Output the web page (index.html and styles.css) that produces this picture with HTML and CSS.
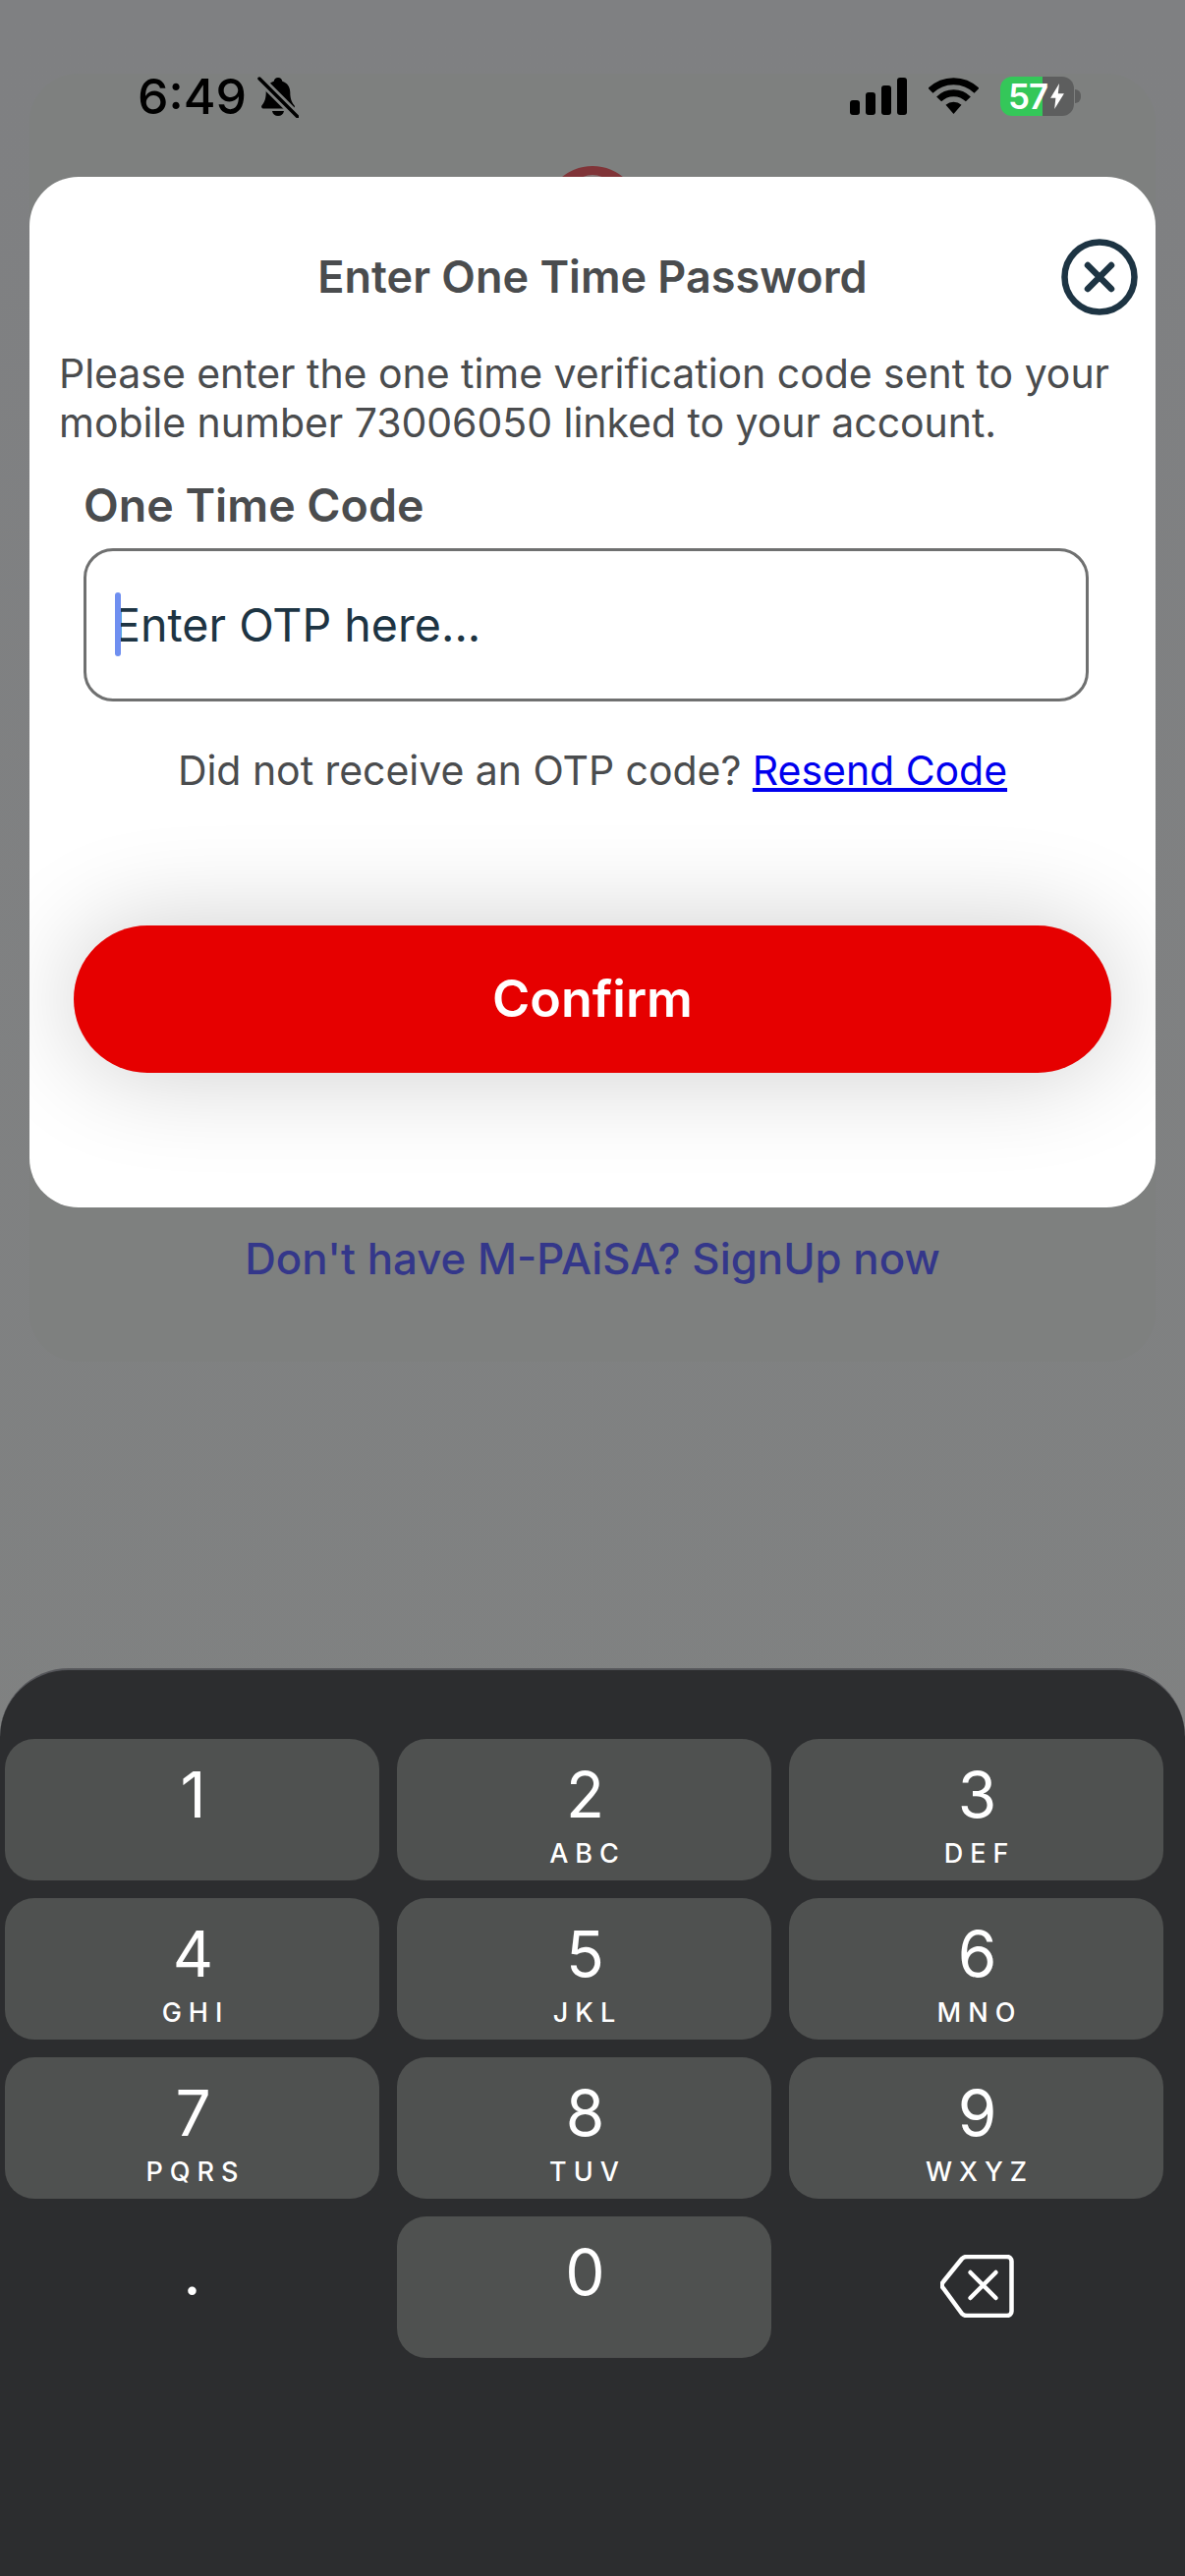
FILE: index.html
```html
<!doctype html>
<html lang="en">
<head>
	<meta charset="UTF-8">
	<title>Enter One Time Password</title>
	<link rel="stylesheet" href="styles.css">
</head>
<body>
	<div class="screen">
		<div class="backcard">
			<div class="status">
				<div class="status-left">
					<span class="time">6:49</span>
					<svg class="bell" width="42" height="42" viewBox="0 0 42 42">
						<path d="M21 1c2.400 0 4 1.600 4.300 3.700 5.200 1.500 8 5.800 8 11.300 0 6 1.200 9.500 4.200 13.300 1 1.300.2 3.200-1.500 3.200H6c-1.700 0-2.500-1.900-1.500-3.200 3-3.800 4.200-7.300 4.200-13.300 0-5.500 2.800-9.800 8-11.300C17 2.600 18.600 1 21 1z"/>
						<path d="M15 35h12c-.6 3.200-3 5-6 5s-5.400-1.800-6-5z"/>
						<path class="bell-cut" d="M0 0l42 42"/>
						<path class="bell-slash" d="M2 2l39 39"/>
					</svg>
				</div>
				<div class="status-right">
					<svg width="58" height="38" viewBox="0 0 58 38">
						<rect x="0" y="23" width="10" height="15" rx="3"/>
						<rect x="16" y="15" width="10" height="23" rx="3"/>
						<rect x="32" y="8" width="10" height="30" rx="3"/>
						<rect x="48" y="0" width="10" height="38" rx="3"/>
					</svg>
					<svg class="wifi" width="51" height="38" viewBox="0 0 51 38">
						<path class="wifi-arc" d="M2 13.300a33.500 33.500 0 0 1 47 0"/>
						<path class="wifi-arc" d="M10.600 21.900a21 21 0 0 1 29.800 0"/>
						<path d="M25.500 37L17.500 27.800a12 12 0 0 1 16 0z"/>
					</svg>
					<div class="battery">
						<span class="battery-level">57</span>
						<svg class="bolt" width="16" height="26" viewBox="0 0 17 32">
							<path d="M11 0L0 18h6.500L5 32 17 12.500H9.500z"/>
						</svg>
					</div>
					<div class="battery-nub"></div>
				</div>
			</div>
			<div class="logo"><div class="logo-inner"></div></div>
			<a class="signup">Don't have M-PAiSA? SignUp now</a>
		</div>

		<div class="keyboard">
			<div class="key"><span class="digit">1</span></div>
			<div class="key"><span class="digit">2</span><span class="letters">ABC</span></div>
			<div class="key"><span class="digit">3</span><span class="letters">DEF</span></div>
			<div class="key"><span class="digit">4</span><span class="letters">GHI</span></div>
			<div class="key"><span class="digit">5</span><span class="letters">JKL</span></div>
			<div class="key"><span class="digit">6</span><span class="letters">MNO</span></div>
			<div class="key"><span class="digit">7</span><span class="letters">PQRS</span></div>
			<div class="key"><span class="digit">8</span><span class="letters">TUV</span></div>
			<div class="key"><span class="digit">9</span><span class="letters">WXYZ</span></div>
			<div class="key key-plain"><span class="dot">.</span></div>
			<div class="key"><span class="digit">0</span></div>
			<div class="key key-plain">
				<svg class="backspace" width="78" height="64" viewBox="0 0 78 64">
					<path d="M27 4h41a4.500 4.500 0 0 1 4.500 4.500v51a4.500 4.500 0 0 1-4.500 4.500H27a7 7 0 0 1-5-2L3 36a4.500 4.500 0 0 1 0-6.500L22 6a7 7 0 0 1 5-2z" transform="translate(0,-2)"/>
					<path d="M30.500 18l26 26M56.500 18l-26 26"/>
				</svg>
			</div>
		</div>

		<div class="modal">
			<svg class="close" width="80" height="80" viewBox="0 0 80 80">
				<circle cx="40" cy="40" r="35.500"/>
				<path d="M28 28l24 24M52 28L28 52"/>
			</svg>
			<h1 class="modal-title">Enter One Time Password</h1>
			<p class="modal-text">Please enter the one time verification code sent to your mobile number 73006050 linked to your account.</p>
			<div class="field-label">One Time Code</div>
			<div class="field">
				<span class="caret"></span>
				<span class="placeholder">Enter OTP here...</span>
			</div>
			<p class="resend">Did not receive an OTP code? <a class="resend-link">Resend Code</a></p>
			<div class="confirm">Confirm</div>
		</div>
	</div>
</body>
</html>
```

FILE: styles.css
```css
*{
	padding: 0;
	margin: 0;
	box-sizing: border-box;
}
body{
	width: 1206px;
	height: 2622px;
	overflow: hidden;
	font-family: "Inter", "Liberation Sans", sans-serif;
	background-color: #7f8081;
}
.screen{
	position: relative;
	width: 1206px;
	height: 2622px;
	display: flex;
	flex-direction: column;
	padding-top: 75px;
	background: linear-gradient(#7f8082, #808281);
}
/*----------------------------page behind the popup----------------------------*/
.backcard{
	margin: 0 30px;
	height: 1311px;
	border-radius: 50px;
	background-color: #7e807f;
	display: flex;
	flex-direction: column;
	align-items: center;
}
.status{
	width: 100%;
	height: 45px;
	padding-left: 110px;
	display: flex;
	justify-content: space-between;
	align-items: center;
	color: #000;
}
.status-left{
	display: flex;
	align-items: center;
	gap: 11px;
}
.time{
	font-size: 50px;
	font-weight: 500;
	line-height: 48px;
}
.bell{
	margin-top: 2px;
}
.bell-cut{
	stroke: #7e807f;
	stroke-width: 9;
}
.bell-slash{
	stroke: #000;
	stroke-width: 3.500;
	stroke-linecap: round;
}
.status-right{
	width: 235px;
	margin-right: 76px;
	display: flex;
	align-items: center;
}
.wifi{
	margin-left: 22px;
	margin-right: 22px;
}
.wifi-arc{
	fill: none;
	stroke: #000;
	stroke-width: 7;
}
.battery{
	width: 75px;
	height: 40px;
	flex-shrink: 0;
	border-radius: 12px;
	padding-left: 8px;
	display: flex;
	align-items: center;
	background: linear-gradient(90deg, #34c759 43px, #5d5e5e 43px);
}
.battery-level{
	font-size: 35px;
	font-weight: 600;
	line-height: 40px;
	letter-spacing: -1px;
	color: #fff;
}
.bolt{
	fill: #fff;
	margin-left: 2px;
	flex-shrink: 0;
}
.battery-nub{
	width: 6px;
	height: 14px;
	flex-shrink: 0;
	margin-left: 1px;
	border-radius: 0 7px 7px 0;
	background-color: #5d5e5e;
}
.logo{
	width: 98px;
	height: 98px;
	margin-top: 49px;
	border-radius: 50%;
	background-color: #803438;
	padding-top: 9px;
}
.logo-inner{
	width: 50px;
	height: 50px;
	margin: 0 auto;
	border-radius: 50%;
	background-color: #8a7c7c;
}
.signup{
	margin-top: 990px;
	font-size: 43.800px;
	line-height: 50px;
	font-weight: 500;
	color: #34378a;
}
/*----------------------------popup----------------------------*/
.modal{
	position: absolute;
	left: 30px;
	top: 180px;
	width: 1146px;
	height: 1049px;
	border-radius: 50px;
	overflow: hidden;
	background-color: #fff;
	padding-top: 72px;
}
.close{
	position: absolute;
	right: 17px;
	top: 62px;
	fill: none;
	stroke: #1d3443;
	stroke-width: 6.500;
	stroke-linecap: round;
}
.modal-title{
	font-size: 45px;
	font-weight: 600;
	line-height: 60px;
	text-align: center;
	color: #4a4c4e;
}
.modal-text{
	margin-top: 43px;
	padding: 0 30px;
	font-size: 41px;
	line-height: 50px;
	color: #4a4c4e;
	letter-spacing: -0.04px;
}
.field-label{
	margin-top: 34px;
	margin-left: 55px;
	font-size: 46.500px;
	font-weight: 600;
	line-height: 50px;
	color: #4a4c4e;
}
.field{
	position: relative;
	margin-top: 19px;
	margin-left: 55px;
	width: 1023px;
	height: 156px;
	border: 3px solid #6f7070;
	border-radius: 30px;
	padding-left: 27px;
	display: flex;
	align-items: center;
}
.caret{
	position: absolute;
	left: 29px;
	top: 42px;
	width: 6px;
	height: 65px;
	border-radius: 3px;
	background-color: #6f8ff0;
}
.placeholder{
	font-size: 46.600px;
	line-height: 60px;
	color: #1d3443;
}
.resend{
	margin-top: 45px;
	font-size: 41px;
	line-height: 50px;
	text-align: center;
	color: #4a4c4e;
	letter-spacing: -0.04px;
}
.resend-link{
	color: #0000ee;
	text-decoration: underline;
}
.confirm{
	margin-top: 133px;
	margin-left: 45px;
	width: 1056px;
	height: 150px;
	border-radius: 75px;
	background-color: #e60000;
	box-shadow: 0 0 105px rgba(0,0,0,0.2);
	font-size: 52px;
	font-weight: 600;
	line-height: 150px;
	text-align: center;
	color: #fff;
}
/*----------------------------number pad----------------------------*/
.keyboard{
	margin-top: auto;
	height: 924px;
	border-top: 2px solid #55565a;
	border-radius: 70px 70px 0 0;
	background-color: #2c2d2f;
	padding: 70px 22px 0 5px;
	display: grid;
	grid-template-columns: repeat(3, 381px);
	grid-auto-rows: 144px;
	gap: 18px;
}
.key{
	border-radius: 30px;
	background-color: #4f5150;
	color: #fff;
	padding-top: 22px;
	display: flex;
	flex-direction: column;
	align-items: center;
}
.key-plain{
	background-color: transparent;
}
.digit{
	margin-left: 2px;
	font-size: 64px;
	font-weight: 400;
	line-height: 70px;
}
.letters{
	margin-top: 10px;
	font-size: 27px;
	font-weight: 500;
	line-height: 30px;
	letter-spacing: 7px;
	margin-right: -7px;
}
.dot{
	font-size: 64px;
	line-height: 70px;
}
.backspace{
	margin-top: 17px;
	margin-left: 5px;
	fill: none;
	stroke: #fff;
	stroke-width: 4.500;
	stroke-linecap: round;
	stroke-linejoin: round;
}
```
